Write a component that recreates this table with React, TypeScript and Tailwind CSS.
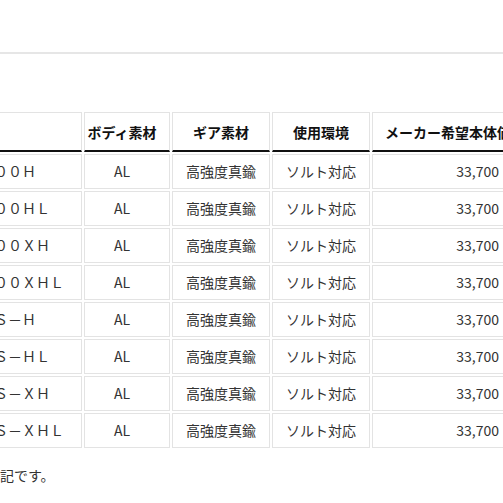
import React from "react";

const rows = [
  "００Ｈ",
  "００ＨＬ",
  "００ＸＨ",
  "００ＸＨＬ",
  "Ｓ－Ｈ",
  "Ｓ－ＨＬ",
  "Ｓ－ＸＨ",
  "Ｓ－ＸＨＬ",
];

const font = { fontFamily: '"Noto Sans CJK JP", "Noto Sans", sans-serif' };

export default function App() {
  return (
    <div className="w-[503px] h-[503px] overflow-hidden bg-white text-[14px] text-[#333]" style={font}>
      <div className="h-[52px]" />
      <div className="h-[2px] bg-[#e6e6e6]" />
      <div className="h-[56px]" />
      <div className="-ml-[20px]">
        <table className="table-fixed border-separate border-spacing-[2px] w-[560px]">
          <colgroup>
            <col className="w-[100px]" />
            <col className="w-[86px]" />
            <col className="w-[98px]" />
            <col className="w-[98px]" />
            <col className="w-[166px]" />
          </colgroup>
          <thead>
            <tr>
              {["", "ボディ素材", "ギア素材", "使用環境", "メーカー希望本体価格"].map((h, i) => (
                <th
                  key={i}
                  className={`border border-[#e3e3e3] border-b-2 border-b-[#111] pt-[10px] pb-[9px] leading-[18px] font-bold text-[#111] whitespace-nowrap ${
                    i === 1 ? "text-center pr-[10px]" : i === 4 ? "text-left pl-[12px]" : "text-center"
                  }`}
                >
                  {h}
                </th>
              ))}
            </tr>
          </thead>
          <tbody>
            {rows.map((r) => (
              <tr key={r}>
                <td className="border border-[#e3e3e3] py-[8px] leading-[17px] pl-[11px] whitespace-nowrap">
                  {r}
                </td>
                <td className="border border-[#e3e3e3] py-[8px] leading-[17px] text-center pr-[10px]">AL</td>
                <td className="border border-[#e3e3e3] py-[8px] leading-[17px] text-center whitespace-nowrap">高強度真鍮</td>
                <td className="border border-[#e3e3e3] py-[8px] leading-[17px] text-center whitespace-nowrap">ソルト対応</td>
                <td className="border border-[#e3e3e3] py-[8px] leading-[17px] text-right pr-[38px]">33,700</td>
              </tr>
            ))}
          </tbody>
        </table>
      </div>
      <div className="mt-[15px] leading-[20px]">記です。</div>
    </div>
  );
}
